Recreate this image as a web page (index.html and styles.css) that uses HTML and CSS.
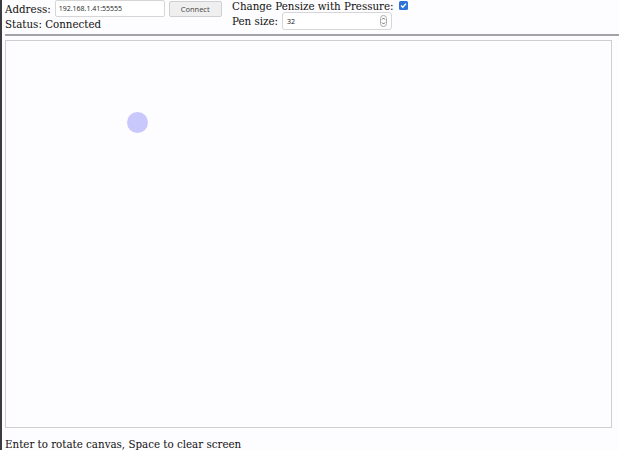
FILE: index.html
```html
<!DOCTYPE html>
<html>
<head>
<meta charset="utf-8">
<link rel="stylesheet" href="styles.css">
</head>
<body>
<div class="top">
  <div class="col left">
    <div class="row r-addr">
      <span class="lbl">Address:</span>
      <input class="addr" type="text" value="192.168.1.41:55555">
      <button class="btn">Connect</button>
    </div>
    <div class="status">Status: Connected</div>
  </div>
  <div class="col right">
    <div class="row r1">
      <span class="lbl">Change Pensize with Pressure:</span>
      <span class="check"><svg width="9" height="9" viewBox="0 0 9 9"><rect width="9" height="9" rx="1.5" fill="#2f73d8"/><path d="M2 4.6 L3.8 6.3 L7 2.6" stroke="#fff" stroke-width="1.4" fill="none"/></svg></span>
    </div>
    <div class="row r2">
      <span class="lbl">Pen size:</span>
      <span class="num"><span class="numval">32</span><span class="spin"><svg width="7" height="12" viewBox="0 0 7 12"><rect x="0.5" y="0.5" width="6" height="11" rx="3" fill="none" stroke="#aaa"/><path d="M2 4.5 L3.5 3 L5 4.5" stroke="#666" fill="none"/><path d="M2 7.5 L3.5 9 L5 7.5" stroke="#666" fill="none"/></svg></span></span>
    </div>
  </div>
</div>
<div class="rule"></div>
<div class="canvas"><div class="dot"></div></div>
<div class="foot">Enter to rotate canvas, Space to clear screen</div>
</body>
</html>
```
FILE: styles.css
```css
html, body { margin: 0; padding: 0; height: 100%; overflow: hidden; }
body {
  background: #fdfcfe;
  border-left: 2px solid #3c3c40;
  box-sizing: border-box;
  padding-left: 3px;
  font-family: "DejaVu Serif", serif;
  font-size: 10.3px;
  color: #111;
}
.top { display: flex; height: 34px; }
.col.left { width: 227px; }
.row { display: flex; align-items: center; }
.r-addr { height: 17px; }
.lbl { line-height: 12px; }
.addr {
  margin-left: 4px;
  width: 110px; height: 17px;
  box-sizing: border-box;
  border: 1px solid #d6d6d6;
  border-radius: 2px;
  background: #fff;
  font-family: "Open Sans", sans-serif;
  font-size: 7px;
  padding: 0 3px;
  color: #222;
}
.btn {
  margin-left: 4px;
  margin-top: 1px;
  width: 53px; height: 16px;
  box-sizing: border-box;
  border: 1px solid #d0d0d0;
  border-radius: 2px;
  background: #efefef;
  font-family: "Open Sans", sans-serif;
  font-size: 7.5px;
  color: #444;
  padding: 0;
}
.status { line-height: 12px; padding-top: 0.5px; }
.r1 { height: 12px; }
.r2 { height: 18px; }
.check { margin-left: 5px; display: flex; margin-top: -2px; }
.num {
  margin-left: 4px;
  width: 110px; height: 18px;
  box-sizing: border-box;
  border: 1px solid #d6d6d6;
  border-radius: 3px;
  background: #fff;
  display: flex; align-items: center; justify-content: space-between;
  padding: 0 4px 0 4px;
  font-family: "Open Sans", sans-serif;
  font-size: 7px;
}
.spin { display: flex; }
.rule { height: 2px; background: #a3a2a6; }
.canvas {
  margin-top: 4px;
  width: 607px; height: 388px;
  box-sizing: border-box;
  border: 1px solid #cfcfd2;
  background: #fdfcfe;
  position: relative;
}
.dot {
  position: absolute;
  left: 121px; top: 71px;
  width: 21px; height: 21px;
  border-radius: 50%;
  background: #c9c8fd;
}
.foot { margin-top: 10px; line-height: 12px; }
```
